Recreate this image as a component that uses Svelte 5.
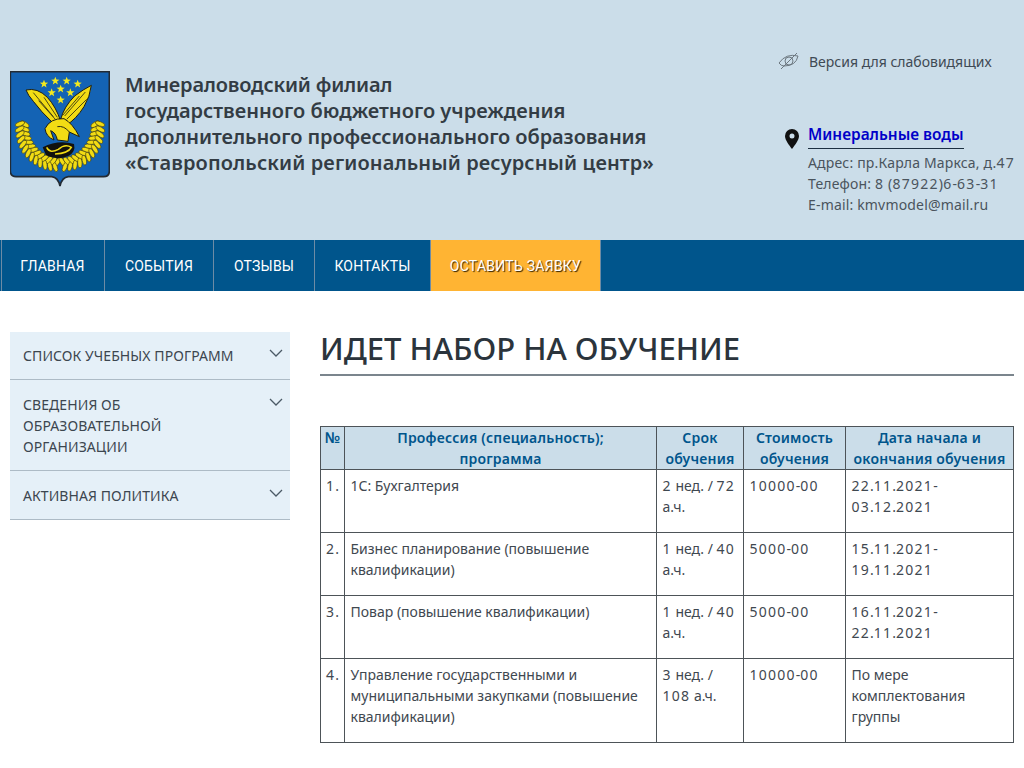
<script>
  const menu = [
    { t: 'ГЛАВНАЯ', w: 104 },
    { t: 'СОБЫТИЯ', w: 109 },
    { t: 'ОТЗЫВЫ', w: 101 },
    { t: 'КОНТАКТЫ', w: 116 }
  ];
  const side = ['СПИСОК УЧЕБНЫХ ПРОГРАММ', 'СВЕДЕНИЯ ОБ ОБРАЗОВАТЕЛЬНОЙ ОРГАНИЗАЦИИ', 'АКТИВНАЯ ПОЛИТИКА'];
  const rows = [
    ['1.', '1С: Бухгалтерия', '2 нед. / 72 а.ч.', '10000-00', '22.11.2021-03.12.2021'],
    ['2.', 'Бизнес планирование (повышение квалификации)', '1 нед. / 40 а.ч.', '5000-00', '15.11.2021-19.11.2021'],
    ['3.', 'Повар (повышение квалификации)', '1 нед. / 40 а.ч.', '5000-00', '16.11.2021-22.11.2021'],
    ['4.', 'Управление государственными и муниципальными закупками (повышение квалификации)', '3 нед. / 108 а.ч.', '10000-00', 'По мере комплектования группы']
  ];
  const parts = (s) => s.split(/(\d+)/).filter(Boolean);
  const isNum = (s) => /^\d/.test(s);

  const star = (cx, cy, r = 13) => {
    const p = [];
    for (let i = 0; i < 10; i++) {
      const a = -Math.PI / 2 + (i * Math.PI) / 5;
      const q = i % 2 ? r * 0.42 : r;
      p.push(`${(cx + q * Math.cos(a)).toFixed(1)},${(cy + q * Math.sin(a)).toFixed(1)}`);
    }
    return p.join(' ');
  };
  const stars = [[132,72],[166,63],[200,63],[233,72],[155,98],[182,87],[211,98],[182,120]];

  // laurel leaves run along an arc below the eagle, on both sides
  const leaves = [];
  for (const side of [-1, 1]) {
    for (let deg = 4; deg <= 98; deg += 7.5) {
      for (const rr of [106, 121]) {
        const a = (deg * Math.PI) / 180;
        const ofs = rr === 106 ? 0 : 3;
        const b = ((deg + ofs) * Math.PI) / 180;
        leaves.push({
          x: 180 + side * rr * Math.sin(b),
          y: 200 + rr * Math.cos(a),
          rot: side * -(deg + ofs) + (side * (rr === 106 ? -28 : 28))
        });
      }
    }
  }
</script>

{#snippet num(text)}{#each parts(text) as p}{#if isNum(p)}<span class="d">{p}</span>{:else}{p}{/if}{/each}{/snippet}

<div class="page">
  <header class="top">
    <div class="brand">
      <svg class="crest" width="100" height="116" viewBox="30 33 300 348">
        <path d="M31 35H328V333Q328 350 311 350H205Q186 352 180 378Q174 352 155 350H48Q31 350 31 333Z" fill="#1463b4" stroke="#222a33" stroke-width="5"/>
        {#each stars as s}
          <polygon points={star(s[0], s[1])} fill="#f4e91e"/>
        {/each}
        {#each leaves as l}
          <ellipse cx={l.x} cy={l.y} rx="6.5" ry="15" fill="#f2dc14" stroke="#3d3a10" stroke-width="1.8" transform="rotate({l.rot} {l.x} {l.y})"/>
        {/each}
        <path d="M128 262Q175 238 222 252Q228 276 205 288Q170 302 138 286Z" fill="#12120e"/>
        <path d="M140 262Q150 282 175 268Q195 250 214 262Q205 280 165 282" fill="none" stroke="#f2dc14" stroke-width="4.5"/>
        <path d="M78 90Q112 82 142 112Q168 140 182 184L156 186Q124 156 100 124Q84 106 78 90Z" fill="#f2dc14" stroke="#1d1d12" stroke-width="3"/>
        <path d="M274 76Q270 110 252 140Q228 178 198 196L182 178Q192 140 224 108Q250 88 274 76Z" fill="#f2dc14" stroke="#1d1d12" stroke-width="3"/>
        <path d="M100 98L160 170M116 122L166 178M132 112L172 172M256 96L194 168M260 118L200 178M238 108L188 166" stroke="#2a2a12" stroke-width="2.5" fill="none"/>
        <path d="M135 206Q150 174 192 176Q218 190 238 230L208 216L204 244L172 240Q168 218 152 212L162 240Q138 230 135 206Z" fill="#f2dc14" stroke="#1d1d12" stroke-width="3"/>
        <path d="M172 200Q192 196 208 216" fill="none" stroke="#2a2a12" stroke-width="3"/>
      </svg>
      <h1>
        <span class="l1">Минераловодский филиал</span>
        <span>государственного бюджетного учреждения</span>
        <span class="l3">дополнительного профессионального образования</span>
        <span class="l4">«Ставропольский региональный ресурсный центр»</span>
      </h1>
    </div>
    <div class="info">
      <div class="vision">
        <svg width="22" height="18" viewBox="0 0 22 18" fill="none" stroke="#6d7880" stroke-width="1">
          <path d="M1 11Q8 1 20 4Q18 14 6 14Q3 14 1 11Z"/><circle cx="11" cy="9" r="4"/><path d="M3 17L19 1"/>
        </svg>
        <span>Версия для слабовидящих</span>
      </div>
      <div class="city">
        <svg width="14" height="20" viewBox="0 0 14 20"><path fill-rule="evenodd" d="M7 0A7 7 0 0 1 14 7C14 11 10 16 7 20C4 16 0 11 0 7A7 7 0 0 1 7 0ZM7 4.5A2.5 2.5 0 1 0 7 9.5A2.5 2.5 0 1 0 7 4.5Z" fill="#111"/></svg>
        <div>
          <a href="#top" class="cityname">Минеральные воды</a>
          <p>{@render num('Адрес: пр.Карла Маркса, д.47')}<br>{@render num('Телефон: 8 (87922)6-63-31')}<br>E-mail: kmvmodel@mail.ru</p>
        </div>
      </div>
    </div>
  </header>

  <nav>
    {#each menu as m}
      <a href="#top" style="width:{m.w}px">{m.t}</a>
    {/each}
    <a href="#top" class="cta">ОСТАВИТЬ ЗАЯВКУ</a>
  </nav>

  <div class="body">
    <aside>
      {#each side as s}
        <div class="item">
          <span>{s}</span>
          <svg width="14" height="8" viewBox="0 0 14 8" fill="none" stroke="#4b5a66" stroke-width="1.3"><path d="M1 1L7 7L13 1"/></svg>
        </div>
      {/each}
    </aside>
    <main>
      <h2>ИДЕТ НАБОР НА ОБУЧЕНИЕ</h2>
      <table>
        <colgroup><col style="width:24px"><col style="width:312px"><col style="width:87px"><col style="width:102px"><col style="width:168px"></colgroup>
        <thead>
          <tr>
            <th>№</th><th>Профессия (специальность);<br>программа</th><th>Срок обучения</th><th>Стоимость обучения</th><th>Дата начала и окончания обучения</th>
          </tr>
        </thead>
        <tbody>
          {#each rows as r}
            <tr>
              <td class="n">{@render num(r[0])}</td><td>{r[1]}</td><td>{@render num(r[2])}</td><td>{@render num(r[3])}</td><td>{@render num(r[4])}</td>
            </tr>
          {/each}
        </tbody>
      </table>
    </main>
  </div>
</div>

<style>
  :global(body) { margin: 0; background: #fff; }
  .page { width: 1024px; font-family: "Noto Sans", sans-serif; font-size: 14px; color: #3f4850; overflow: hidden; }
  .d { letter-spacing: 1.25px; }
  .top { height: 240px; background: #cbdde9; display: flex; justify-content: space-between; box-sizing: border-box; padding: 0 10px; }
  .brand { display: flex; gap: 15px; padding-top: 71px; }
  .crest { display: block; }
  h1 { margin: 0; font-size: 20px; line-height: 26.1px; font-weight: 600; color: #333c44; padding-top: 1px; }
  h1 span { display: block; white-space: nowrap; }
  h1 .l1 { letter-spacing: -0.2px; }
  h1 .l3 { letter-spacing: -0.09px; }
  h1 .l4 { letter-spacing: 0.11px; }
  .info { width: 236px; padding-top: 51px; box-sizing: border-box; margin-left: -10px; }
  .vision { display: flex; align-items: center; gap: 9px; height: 20px; color: #3f4a54; }
  .city { display: flex; gap: 9px; margin: 53px 0 0 7px; }
  .city svg { margin-top: 5px; flex: none; }
  .cityname { display: inline-block; font-size: 15.4px; font-weight: 600; color: #0000c8; text-decoration: none; border-bottom: 1px solid #1c2f40; line-height: 22px; padding-bottom: 2px; }
  .city p { margin: 3px 0 0; line-height: 21px; color: #4a545d; white-space: nowrap; letter-spacing: 0.17px; }
  nav { height: 51px; background: #00558c; display: flex; padding-left: 1px; }
  nav a { box-sizing: border-box; color: #fff; text-decoration: none; font-family: Roboto, sans-serif; font-size: 14px; letter-spacing: 0.2px; display: flex; align-items: center; justify-content: center; border-right: 1px solid #6d8ba5; }
  nav a:first-child { border-left: 1px solid #6d8ba5; padding-right: 1px; }
  nav a.cta { width: 170px; background: #ffb433; letter-spacing: 0.25px; text-shadow: 1px 1px 1px #2e1e02; }
  .body { display: flex; padding: 41px 10px 0; gap: 30px; }
  aside { width: 280px; flex: none; background: #e5f0f8; align-self: flex-start; }
  .item { display: flex; justify-content: space-between; padding: 14px 7px 13px 13px; border-bottom: 1px solid #adbbc6; line-height: 21px; color: #3c464f; letter-spacing: 0.08px; }
  .item:first-child { padding-top: 13px; }
  .item span { width: 170px; }
  .item:first-child span, .item:last-child span { white-space: nowrap; }
  .item svg { margin-top: 4px; flex: none; }
  main { flex: 1; min-width: 0; }
  h2 { margin: 0; font-size: 31px; font-weight: 500; line-height: 33px; color: #2b343c; padding-bottom: 9px; border-bottom: 2px solid #7b858d; }
  table { margin-top: 50px; width: 694px; border-collapse: collapse; table-layout: fixed; line-height: 21px; }
  th, td { border: 1px solid #4d5358; vertical-align: top; }
  th { background: #cbdde9; color: #00558c; font-weight: 600; text-align: center; padding: 0 5px; letter-spacing: 0.2px; }
  th:first-child { padding: 0; font-size: 15px; }
  td { padding: 5px 5px 15px 5.5px; }
  td.n { text-align: center; padding: 5px 0 15px; }
</style>
